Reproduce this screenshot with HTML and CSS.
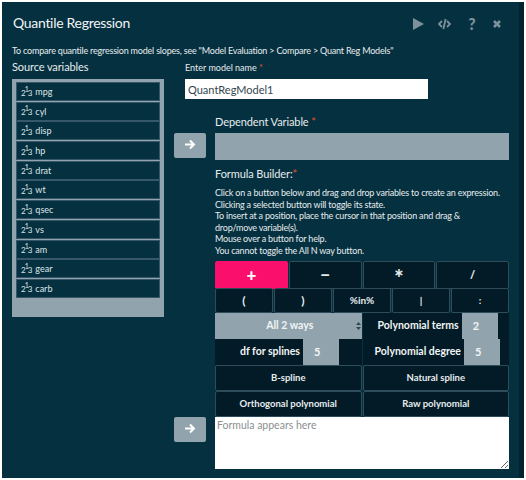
FILE: index.html
```html
<!DOCTYPE html>
<html lang="en">
<head>
  <meta charset="UTF-8">
  <title>Quantile Regression</title>
  <link rel="stylesheet" href="styles.css">
</head>
<body>
  <div class="dialog">
    <div class="panel">
      <div class="title-bar">
        <h2>Quantile Regression</h2>
        <div class="tools">
          <svg class="tool" width="11" height="12" viewBox="0 0 11 12"><path d="M0 0 L11 6 L0 12 Z"/></svg>
          <svg class="tool" width="13" height="12" viewBox="0 0 13 12"><path d="M4 3 L1 6 L4 9 M9 3 L12 6 L9 9 M7.6 1 L5.4 11" fill="none" stroke-width="1.8"/></svg>
          <span class="tool-help">?</span>
          <svg class="tool" width="8" height="8" viewBox="0 0 8 8"><path d="M1 1 L7 7 M7 1 L1 7" fill="none" stroke-width="2.6"/></svg>
        </div>
      </div>
      <p class="note">To compare quantile regression model slopes, see "Model Evaluation &gt; Compare &gt; Quant Reg Models"</p>

      <div class="columns">
        <div class="source">
          <h4>Source variables</h4>
          <ul class="var-list">
            <li><span class="var-icon">2<sup>1</sup>3</span> mpg</li>
            <li><span class="var-icon">2<sup>1</sup>3</span> cyl</li>
            <li><span class="var-icon">2<sup>1</sup>3</span> disp</li>
            <li><span class="var-icon">2<sup>1</sup>3</span> hp</li>
            <li><span class="var-icon">2<sup>1</sup>3</span> drat</li>
            <li><span class="var-icon">2<sup>1</sup>3</span> wt</li>
            <li><span class="var-icon">2<sup>1</sup>3</span> qsec</li>
            <li><span class="var-icon">2<sup>1</sup>3</span> vs</li>
            <li><span class="var-icon">2<sup>1</sup>3</span> am</li>
            <li><span class="var-icon">2<sup>1</sup>3</span> gear</li>
            <li><span class="var-icon">2<sup>1</sup>3</span> carb</li>
          </ul>
        </div>

        <div class="target">
          <div class="model-name">
            <label>Enter model name <span class="req">*</span></label>
            <input type="text" value="QuantRegModel1">
          </div>

          <div class="move-row">
            <button class="arrow-btn"><svg width="12" height="11" viewBox="0 0 12 11"><path d="M1 5.5 H10 M6 1.5 L10 5.5 L6 9.5" fill="none" stroke="#fff" stroke-width="2"/></svg></button>
            <div class="move-body">
              <h5>Dependent Variable <span class="req">*</span></h5>
              <div class="drop-box"></div>
            </div>
          </div>

          <div class="move-row formula-row">
            <button class="arrow-btn"><svg width="12" height="11" viewBox="0 0 12 11"><path d="M1 5.5 H10 M6 1.5 L10 5.5 L6 9.5" fill="none" stroke="#fff" stroke-width="2"/></svg></button>
            <div class="move-body">
              <h5>Formula Builder:<span class="req">*</span></h5>
              <p class="help">Click on a button below and drag and drop variables to create an expression.<br>
              Clicking a selected button will toggle its state.<br>
              To insert at a position, place the cursor in that position and drag &amp;<br>
              drop/move variable(s).<br>
              Mouse over a button for help.<br>
              You cannot toggle the All N way button.</p>

              <div class="ops ops-4">
                <button class="op active">+</button>
                <button class="op">−</button>
                <button class="op star">*</button>
                <button class="op slash">/</button>
              </div>
              <div class="ops ops-5">
                <button class="op paren">(</button>
                <button class="op paren">)</button>
                <button class="op">%in%</button>
                <button class="op">|</button>
                <button class="op">:</button>
              </div>
              <div class="ops ops-2">
                <div class="way-select">All 2 ways
                  <svg class="sort" width="5" height="8" viewBox="0 0 5 8"><path d="M2.5 0 L5 3 H0 Z M2.5 8 L5 5 H0 Z"/></svg>
                </div>
                <div class="num-cell terms"><span>Polynomial terms</span><span class="num">2</span></div>
              </div>
              <div class="ops ops-2">
                <div class="num-cell splines"><span>df for splines</span><span class="num">5</span></div>
                <div class="num-cell degree"><span>Polynomial degree</span><span class="num">5</span></div>
              </div>
              <div class="ops ops-2">
                <button class="op small">B-spline</button>
                <button class="op small">Natural spline</button>
              </div>
              <div class="ops ops-2">
                <button class="op small">Orthogonal polynomial</button>
                <button class="op small">Raw polynomial</button>
              </div>
              <textarea placeholder="Formula appears here"></textarea>
            </div>
          </div>
        </div>
      </div>
    </div>
    <div class="scroll-strip"></div>
  </div>
</body>
</html>
```

FILE: styles.css
```css
* {
  box-sizing: border-box;
}

body {
  margin: 0;
  padding: 2px;
  height: 480px;
  overflow: hidden;
  background: #fff;
  font-family: Lato, "Noto Sans", sans-serif;
  color: #fff;
}

.dialog {
  display: flex;
  height: 476px;
  background: #05303f;
}

.panel {
  flex: 1;
  padding: 0 10px;
  min-width: 0;
}

.scroll-strip {
  width: 5px;
  background: #03222e;
}

.title-bar {
  display: flex;
  justify-content: space-between;
  align-items: center;
  height: 42px;
}

.title-bar h2 {
  margin: 0 0 2px 1px;
  font-size: 14px;
  font-weight: 400;
  letter-spacing: -0.3px;
  color: #f1f4f5;
}

.tools {
  display: flex;
  align-items: center;
  gap: 14px;
  padding: 2px 8px 0 0;
}

.tool {
  fill: #7b929d;
  stroke: #7b929d;
  stroke-width: 0;
}

.tool-help {
  font-size: 16px;
  font-weight: 900;
  line-height: 14px;
  color: #7b929d;
  width: 14px;
  text-align: center;
}

.note {
  margin: 0;
  font-size: 9px;
  letter-spacing: -0.2px;
  line-height: 13px;
  color: #e6ecee;
  white-space: nowrap;
}

.columns {
  display: flex;
  gap: 10px;
}

.source {
  width: 152px;
  flex: none;
}

.source h4 {
  margin: 3px 0 5px;
  font-size: 11px;
  letter-spacing: -0.1px;
  line-height: 14px;
  font-weight: 400;
  color: #e6ecee;
}

.var-list {
  list-style: none;
  margin: 0;
  padding: 3px 4px;
  height: 238px;
  background: #91a4ad;
}

.var-list li {
  height: 19px;
  margin-bottom: 0.7px;
  padding-left: 4px;
  display: flex;
  align-items: center;
  gap: 4px;
  background: #05303f;
  border: 1px solid #36586a;
  font-size: 9px;
  color: #dfe6e9;
}

.var-icon {
  font-size: 8px;
  letter-spacing: -1px;
  padding-top: 2px;
}

.var-icon sup {
  font-size: 7px;
  line-height: 0;
  vertical-align: 4px;
}

.target {
  flex: 1;
  min-width: 0;
}

.model-name {
  margin: 5px 0 0 11px;
}

.model-name label {
  display: block;
  font-size: 9px;
  line-height: 12px;
  color: #e6ecee;
}

.req {
  color: #e4502f;
}

.model-name input {
  display: block;
  width: 243px;
  height: 20px;
  margin-top: 5px;
  padding: 0 3px;
  border: 0;
  background: #fff;
  font-family: inherit;
  font-size: 11px;
  color: #33464f;
}

.move-row {
  display: flex;
  gap: 9px;
  margin-top: 15px;
}

.arrow-btn {
  width: 32px;
  height: 25px;
  flex: none;
  margin-top: 19px;
  padding: 0;
  border: 0;
  border-radius: 2px;
  background: #91a4ad;
}

.move-body {
  width: 294px;
  flex: none;
}

.move-body h5 {
  margin: 0;
  font-size: 11px;
  letter-spacing: -0.1px;
  line-height: 15px;
  font-weight: 400;
  color: #e6ecee;
}

.drop-box {
  height: 27px;
  margin-top: 4px;
  background: #91a4ad;
}

.formula-row {
  margin-top: 6px;
  align-items: flex-end;
}

.formula-row .arrow-btn {
  margin: 0 0 27px;
}

.help {
  margin: 6px 0 4px;
  font-size: 9px;
  letter-spacing: -0.2px;
  line-height: 11.6px;
  white-space: nowrap;
  color: #e6ecee;
}

.ops {
  display: grid;
  height: 25.8px;
  gap: 1px;
}

.ops-4 {
  grid-template-columns: repeat(4, 1fr);
  height: 26px;
  margin-bottom: 1px;
}

.ops-5 {
  grid-template-columns: repeat(5, 1fr);
}

.ops-2 {
  grid-template-columns: repeat(2, 1fr);
}

.op {
  padding: 0;
  background: #031b26;
  border: 1px solid #2f4c5a;
  border-radius: 2px;
  font-family: inherit;
  font-size: 10px;
  font-weight: 700;
  color: #e6ecee;
}

.op.small {
  font-size: 9.5px;
}

.ops-4 .op {
  font-size: 17px;
  font-weight: 900;
}

.ops-4 .op.star {
  font-size: 22px;
  line-height: 20px;
  padding-top: 6px;
}

.ops-4 .op.slash {
  font-size: 11px;
}

.op.paren {
  font-size: 12px;
}

.op.active {
  background: #fb0f6c;
  border-color: #fb0f6c;
  color: #fff;
}

.way-select {
  position: relative;
  background: #91a4ad;
  font-size: 10.5px;
  font-weight: 700;
  line-height: 25px;
  text-align: center;
  padding-left: 3px;
  color: #f1f4f5;
}

.sort {
  position: absolute;
  right: 1px;
  top: 9px;
  fill: #33464f;
}

.num-cell {
  display: flex;
  align-items: stretch;
  background: #031b26;
  font-size: 10.5px;
  font-weight: 700;
  line-height: 25px;
  color: #f1f4f5;
}

.num-cell.terms {
  padding-left: 15px;
  gap: 3px;
}

.num-cell.degree {
  padding-left: 12px;
  gap: 3px;
}

.num-cell.splines {
  padding-left: 25px;
  gap: 3px;
}

.num {
  width: 36px;
  padding-left: 11px;
  background: #91a4ad;
  font-size: 11px;
}

textarea {
  display: block;
  width: 100%;
  height: 52px;
  margin-top: 0;
  padding: 2px;
  border: 0;
  background: #fff;
  font-family: inherit;
  font-size: 10.5px;
}

textarea::placeholder {
  color: #8a8f92;
}
```
